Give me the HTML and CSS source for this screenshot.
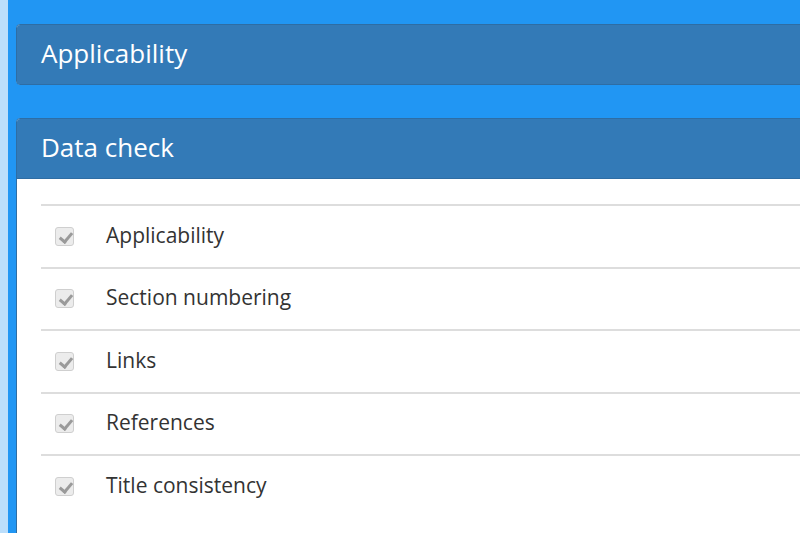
FILE: index.html
```html
<!DOCTYPE html>
<html lang="en">
<head>
  <meta charset="UTF-8" />
  <title>Data check</title>
  <link rel="stylesheet" href="styles.css">
</head>
<body>

<div class="page">

  <div class="panel">
    <div class="panel-heading">Applicability</div>
  </div>

  <div class="panel">
    <div class="panel-heading">Data check</div>
    <div class="panel-body">
      <table class="checks">
        <tr><td class="box"><span class="check"></span></td><td>Applicability</td></tr>
        <tr><td class="box"><span class="check"></span></td><td>Section numbering</td></tr>
        <tr><td class="box"><span class="check"></span></td><td>Links</td></tr>
        <tr><td class="box"><span class="check"></span></td><td>References</td></tr>
        <tr><td class="box"><span class="check"></span></td><td>Title consistency</td></tr>
      </table>
    </div>
  </div>

</div>

</body>
</html>
```

FILE: styles.css
```css
:root {
  --strip: #bbdefb;
  --bg: #2196f3;
  --primary: #337ab7;
  --text: #333;
}
* {
  box-sizing: border-box;
}
html, body {
  height: 100%;
}
body {
  margin: 0;
  font-family: 'Open Sans', 'Noto Sans', sans-serif;
  background: var(--bg);
  color: var(--text);
  border-left: 8px solid var(--strip);
  overflow: hidden;
}
.page {
  width: 1100px;
  padding: 24px 0 0 8px;
}
.panel {
  background: #fff;
  border: 1px solid #2e6da4;
  border-radius: 4px;
  margin-bottom: 33px;
}
.panel-heading {
  background: var(--primary);
  color: #fff;
  height: 59px;
  padding: 0 0 4px 24px;
  display: flex;
  align-items: center;
  font-size: 26px;
  border-radius: 3px 3px 0 0;
}
.panel-body {
  padding: 25px 24px 24px;
  border-top: 1px solid #2e6da4;
}
.checks {
  width: 100%;
  border-collapse: collapse;
  font-size: 21px;
}
.checks td {
  border-top: 2px solid #ddd;
  height: 62.5px;
  padding: 0 0 3px;
  vertical-align: middle;
}
.checks td.box {
  width: 65px;
  padding: 0 0 0 14px;
}
.check {
  display: block;
  width: 19px;
  height: 19px;
  border: 1px solid #cfcfcf;
  border-radius: 3px;
  background: #ececec;
  position: relative;
}
.check::after {
  content: '';
  position: absolute;
  left: 6px;
  top: 2px;
  width: 5px;
  height: 10px;
  border: solid #9a9a9a;
  border-width: 0 3px 3px 0;
  transform: rotate(40deg);
}
```
